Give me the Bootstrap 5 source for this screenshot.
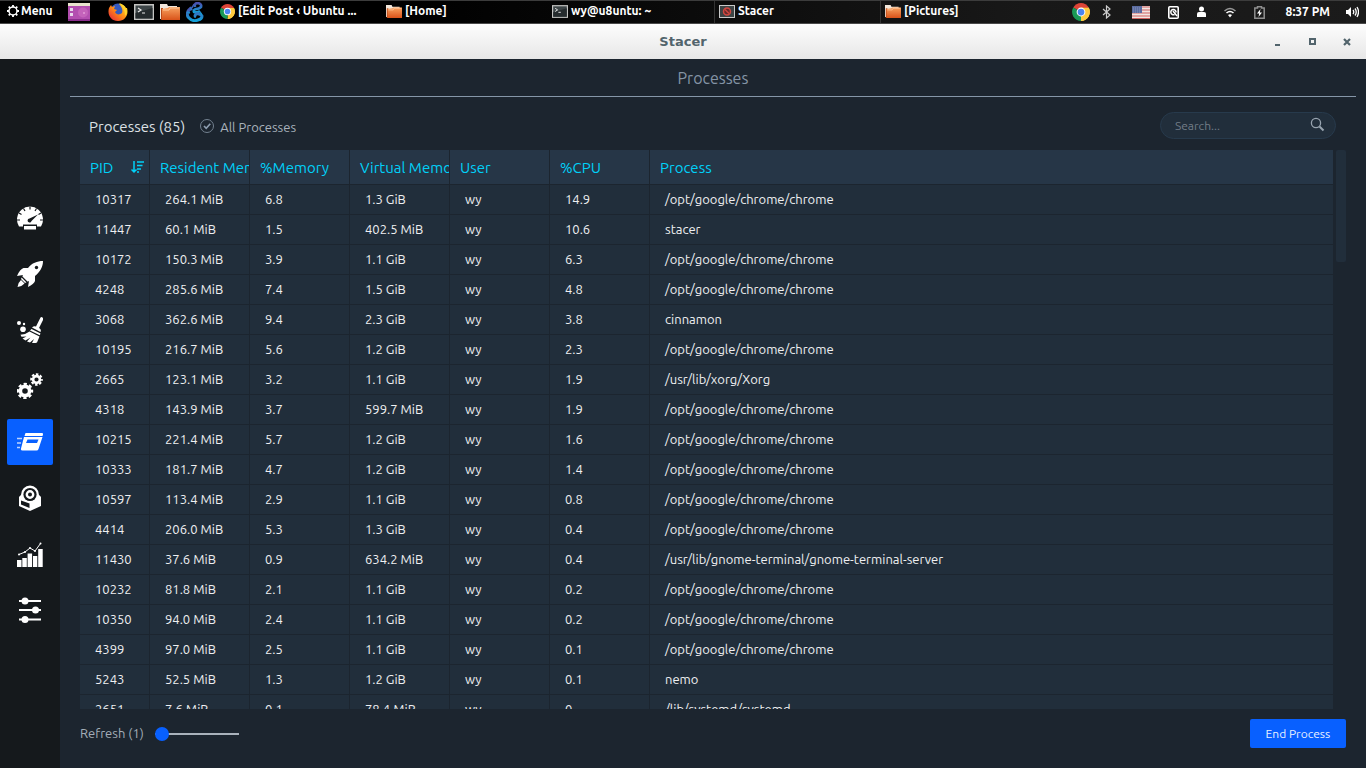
<!DOCTYPE html>
<html lang="en">
<head>
<meta charset="utf-8">
<meta name="viewport" content="width=device-width, initial-scale=1">
<title>Stacer</title>
<link href="https://cdn.jsdelivr.net/npm/bootstrap@5.3.0/dist/css/bootstrap.min.css" rel="stylesheet">
<style>
  :root { --st-bg: #1c252f; --st-row: #212e3b; --st-head: #263647; --st-blue: #0860ff; --st-cyan: #00d1f9; --st-line: #8596a8; }
  body { font-family: Ubuntu, "Noto Sans", sans-serif; font-size: 13px; line-height: 20px; background: var(--st-bg); color: #eff0f2; }
  button, input { font: inherit; }
  svg { display: block; flex: none; }

  /* desktop panel */
  .desk-panel { height: 24px; background: linear-gradient(90deg, #000 30%, #181818 75%, #1b1b1b); border-top: 1px solid #3c3c3c; border-bottom: 1px solid #4a4a4a; color: #fff; font-weight: 700; font-size: 12px; line-height: 20px; }
  .desk-panel button { background: none; border: 0; color: inherit; padding: 0; height: 22px; display: flex; align-items: center; }
  .menu-area { width: 216px; padding-left: 6px; }
  .desk-panel .menu-label { width: 62px; gap: 1px; padding-bottom: 2px; }
  .launchers { gap: 6px; }
  .desk-panel .task { width: 166px; padding: 0 0 2px 4px; gap: 3px; white-space: nowrap; }
  .desk-panel .task.lined { border-left: 1px solid #333; }
  .tray { padding-right: 7px; }
  .tray .near { margin-left: 18px; }
  .tray .far { margin-left: 21px; }

  /* title bar */
  .title-bar { height: 35px; background: linear-gradient(#fdfdfd, #e7e7e7); color: #52646c; font: 700 13px/20px "DejaVu Sans", sans-serif; display: grid; grid-template-columns: 1fr auto 1fr; align-items: center; }
  .title-bar button { background: none; border: 0; padding: 0; }
  .win-buttons { gap: 23px; padding-right: 13px; }

  /* side bar */
  .side-bar { width: 60px; background: #15191c; gap: 10px; }
  .side-bar a { width: 46px; height: 46px; border-radius: 2px; color: #fff; display: flex; align-items: center; justify-content: center; }
  .side-bar a.active { background: var(--st-blue); }

  /* page */
  .page-title { font-size: 16px; line-height: 24px; font-weight: 400; color: #8494a5; padding: 7px 0 6px; border-bottom: 1px solid var(--st-line); margin: 0 10px; }
  .tool-row { padding: 14px 30px 10px 29px; height: 53px; }
  .proc-count { font-size: 15px; line-height: 20px; font-weight: 400; color: #dde1e5; padding-top: 2px; }
  .all-check { gap: 6px; margin-left: 15px; color: #a9b2bc; }
  .all-check span { padding-top: 2px; }
  .all-check input { appearance: none; width: 14px; height: 14px; margin: 0; border: 1px solid #73818f; border-radius: 50%; background: url("data:image/svg+xml,%3Csvg xmlns='http://www.w3.org/2000/svg' viewBox='0 0 12 12'%3E%3Cpath d='M3 6l2.2 2.4L9.3 3.8' fill='none' stroke='%238d9db0' stroke-width='1.6'/%3E%3C/svg%3E"); }
  .search-box { width: 176px; height: 27px; border: 1px solid #273a4c; border-radius: 14px; background: var(--st-row); padding: 0 10px 0 14px; color: #98a4b0; }
  .search-box input { background: none; border: 0; outline: 0; min-width: 0; font-size: 12px; color: #98a4b0; padding: 0; }
  .search-box input::placeholder { color: #717c87; opacity: 1; }
  .search-box button { background: none; border: 0; padding: 0 0 2px; color: inherit; }
  .table-area { margin: 0 20px; gap: 3px; min-height: 0; flex: 1 1 0; }
  .table-clip { overflow: hidden; }
  .proc-table { width: 100%; table-layout: fixed; border-collapse: separate; border-spacing: 0; }
  .proc-table th { height: 35px; padding: 2px 0 0 10px; background: var(--st-head); color: var(--st-cyan); font-size: 15px; font-weight: 400; white-space: nowrap; overflow: hidden; }
  .proc-table td { height: 30px; padding: 0 0 2px 15px; background: var(--st-row); white-space: nowrap; }
  .proc-table th, .proc-table td { border-right: 1px solid var(--st-bg); border-bottom: 1px solid var(--st-bg); }
  .proc-table th:last-child, .proc-table td:last-child { border-right: 0; }
  .proc-table .c-pid { width: 70px; }
  .proc-table .c-mid { width: 100px; }
  .scroll-thumb { width: 10px; height: 112px; background: var(--st-row); border-radius: 2px; }
  .foot-row { padding: 10px 20px 20px; color: #a3adb7; }
  .foot-row label { padding-bottom: 2px; }
  .refresh { width: 84px; height: 14px; margin-left: 11px; appearance: none; background: none; }
  .refresh::-webkit-slider-runnable-track { height: 2px; background: #a9b2bc; }
  .refresh::-webkit-slider-thumb { appearance: none; width: 14px; height: 14px; margin-top: -6px; border-radius: 50%; background: var(--st-blue); }
  .btn-end { width: 96px; height: 29px; padding: 0; border: 0; border-radius: 2px; background: var(--st-blue); color: #e8f0ff; font-size: 12px; line-height: 20px; }
</style>
</head>
<body>
<svg width="0" height="0" class="position-absolute" aria-hidden="true">
  <defs>
    <linearGradient id="orange" x1="0" y1="0" x2="0" y2="1"><stop offset="0" stop-color="#f7a260"/><stop offset="1" stop-color="#d9531a"/></linearGradient>
    <linearGradient id="fox" x1="1" y1="0" x2="0" y2="1"><stop offset="0" stop-color="#ffe62e"/><stop offset=".5" stop-color="#ff8a16"/><stop offset="1" stop-color="#e31b3f"/></linearGradient>
    <linearGradient id="dragon" x1="0" y1="0" x2="0" y2="1"><stop offset="0" stop-color="#4a50ae"/><stop offset="1" stop-color="#12a0d8"/></linearGradient>
    <symbol id="chrome" viewBox="0 0 16 16"><path d="M8 8L1.1 4A8 8 0 0 1 14.9 4z" fill="#dd4437"/><path d="M8 8l6.9-4A8 8 0 0 1 8 16z" fill="#fcca3f"/><path d="M8 8v8A8 8 0 0 1 1.1 4z" fill="#1a9a57"/><path d="M8 4.3h6.9A8 8 0 0 1 8 16l3.4-6z" fill="#fcca3f"/><circle cx="8" cy="8" r="3.9" fill="#fff"/><circle cx="8" cy="8" r="3" fill="#4a86f0"/></symbol>
    <symbol id="folder" viewBox="0 0 20 18"><path d="M0 1h7l1 2h9v13H0z" fill="#f2e7dc"/><path d="M1 5h2v12H1z" fill="#bd4a18"/><path d="M2 17V6l6-1 1-1h11v13z" fill="url(#orange)"/><path d="M3 7h6l1-2h9" fill="none" stroke="#ffc79b"/></symbol>
    <symbol id="term" viewBox="0 0 20 16"><path d="M0 0h20v16H0z" fill="#c4c4c2"/><path d="M1.500 1.500h17v13h-17z" fill="#3d4547"/><path d="M1.500 9L18.500 4v10.500h-17z" fill="#252b2d"/><path d="M4 4l3 2-3 2M8 9h3" fill="none" stroke="#e8e8e8" stroke-width="1.200"/></symbol>
  </defs>
</svg>

<div class="vh-100 d-flex flex-column overflow-hidden">
  <nav class="desk-panel d-flex flex-shrink-0" aria-label="Desktop panel">
    <div class="menu-area d-flex align-items-center flex-shrink-0">
      <button type="button" class="menu-label"><svg width="14" height="14" viewBox="0 0 14 14" fill="none" stroke="#fff"><circle cx="7" cy="7" r="4" stroke-width="1.500"/><path d="M7 1v2M7 11v2M1 7h2M11 7h2M2.700 2.700l1.500 1.500M9.800 9.800l1.500 1.500M2.700 11.300l1.500-1.500M9.800 4.200l1.500-1.500" stroke-width="1.800"/></svg>Menu</button>
      <button type="button" aria-label="Show desktop"><svg width="22" height="18" viewBox="0 0 22 18"><path d="M0 0h22v18H0z" fill="#8a2d8c"/><path d="M0 3h22v13H0z" fill="#b34fb0"/><circle cx="15" cy="9.500" r="5" fill="#c463bb"/><circle cx="16" cy="10" r="1" fill="#e39ad8"/><path d="M0 0h22v3H0z" fill="#e9e4cf"/><path d="M2 5h3v3H2zM2 10h3v3H2z" fill="#e8d8ec"/></svg></button>
      <div class="launchers d-flex align-items-center ms-auto me-2 pe-1">
        <button type="button" aria-label="Firefox"><svg width="20" height="20" viewBox="0 0 20 20"><circle cx="10" cy="9" r="7.500" fill="#3459bf"/><path d="M3 3l1 2 3-1-1 3 3 1-2 2c1 3 5 3 7 1 1-3 0-6-3-9 4 0 6 2 7 4l1 0c2 7-2 13-9 13S-1 13 1 6z" fill="url(#fox)"/><path d="M11 1c4 1 8 5 8 10l-2 3c0-5-1-8-6-13z" fill="#ffd52c"/></svg></button>
        <button type="button" aria-label="Terminal"><svg width="20" height="16"><use href="#term"/></svg></button>
        <button type="button" aria-label="Files"><svg width="20" height="18"><use href="#folder"/></svg></button>
        <button type="button" aria-label="Dragon editor"><svg width="18" height="20" viewBox="0 0 18 20" fill="none" stroke="url(#dragon)"><path d="M9 5q-1-4 3-4 4 1 3 4-2 2-5 2-3 1-2 3 3 1 6-1" stroke-width="2.600"/><path d="M6 6C1 8 0 13 3 16q4 4 9 2 4-1 4-4-2-3-6-2-2 2 0 3" stroke-width="3"/><path d="M8 2L6 6M4 5l2 3M1 10l3 1M14 10l2 3" stroke-width="1.500"/></svg></button>
      </div>
    </div>
    <button type="button" class="task"><svg width="15" height="15"><use href="#chrome"/></svg>[Edit Post ‹ Ubuntu ...</button>
    <button type="button" class="task"><svg width="16" height="15"><use href="#folder"/></svg>[Home]</button>
    <button type="button" class="task"><svg width="16" height="13"><use href="#term"/></svg>wy@u8untu: ~</button>
    <button type="button" class="task lined"><svg width="16" height="13" viewBox="0 0 16 13"><path d="M0 0h16v13H0z" fill="#c9c9c9"/><path d="M1 1h14v11H1z" fill="#3c4445"/><circle cx="8" cy="6.500" r="3.500" fill="#642b2b" stroke="#d04740" stroke-width="1.500"/><path d="M6 4.500l4 4" stroke="#d04740" stroke-width="1.500"/></svg>Stacer</button>
    <button type="button" class="task lined"><svg width="16" height="15"><use href="#folder"/></svg>[Pictures]</button>
    <div class="tray d-flex align-items-center ms-auto">
      <button type="button" aria-label="Chrome"><svg width="18" height="18"><use href="#chrome"/></svg></button>
      <button type="button" class="ms-2 ps-1" aria-label="Bluetooth"><svg width="9" height="14" viewBox="0 0 9 14" fill="none" stroke="#ccc" stroke-width="1.200"><path d="M1 4l7 6-3.500 3V1L8 4l-7 6"/></svg></button>
      <button type="button" class="far" aria-label="Keyboard layout"><svg width="18" height="13" viewBox="0 0 18 13"><path d="M0 0h18v13H0z" fill="#f0e5e2"/><path d="M0 1h18M0 4h18M0 7h18M0 10h18M0 12.500h18" stroke="#cf6260" stroke-width="1.200"/><path d="M0 0h10v7H0z" fill="#5b6c9f"/><path d="M1 2h8M1 4h8M1 6h8" stroke="#8793bb" stroke-dasharray="1 1"/></svg></button>
      <button type="button" class="near" aria-label="Disk"><svg width="11" height="13" viewBox="0 0 11 13"><rect x=".8" y=".8" width="9.400" height="11.400" rx="1" fill="none" stroke="#fff" stroke-width="1.600"/><path d="M6.500 8.500A2.600 2.600 0 1 1 8 6.500M5 5l4 5" fill="none" stroke="#fff" stroke-width="1.500"/></svg></button>
      <button type="button" class="near" aria-label="User"><svg width="9" height="12" viewBox="0 0 9 12" fill="#fff"><circle cx="4.500" cy="3" r="2.500"/><path d="M0 11V8q0-2 2-2h5q2 0 2 2v3z"/></svg></button>
      <button type="button" class="near" aria-label="Wireless network"><svg width="12" height="11" viewBox="0 0 12 11" fill="none"><path d="M.5 4q5.500-5 11 0" stroke="#999" stroke-width="1.500"/><path d="M2.500 6q3.500-3 7 0" stroke="#fff" stroke-width="1.600"/><path d="M4 8q2-1.500 4 0l-2 2.500z" fill="#fff"/></svg></button>
      <button type="button" class="near" aria-label="Battery"><svg width="11" height="13" viewBox="0 0 11 13"><path d="M3.500 2V.7h4V2h2.700v10.200H.8V2z" fill="none" stroke="#8f8f8f" stroke-width="1.500"/><path d="M6.500 3L3 7.500h2.200L4.500 11 8 6.500H5.800z" fill="#fff"/></svg></button>
      <span class="far">8:37 PM</span>
      <button type="button" class="ms-3" aria-label="Volume"><svg width="13" height="12" viewBox="0 0 13 12" fill="none" stroke="#fff" stroke-width="1.300"><path d="M0 4h2l3-3v10L2 8H0z" fill="#fff" stroke="none"/><path d="M7 4q1.500 2 0 4M9 2.500q2.500 3.500 0 7M11 1q3 5 0 10"/></svg></button>
    </div>
  </nav>

  <header class="title-bar flex-shrink-0">
    <span></span><span>Stacer</span>
    <div class="win-buttons d-flex justify-content-end align-items-center">
      <button type="button" aria-label="Minimize"><svg width="12" height="10"><path d="M4 7h5v2H4z" fill="#52646c"/></svg></button>
      <button type="button" aria-label="Maximize"><svg width="12" height="10"><path d="M4 2h5v5H4z" fill="none" stroke="#52646c" stroke-width="2"/></svg></button>
      <button type="button" aria-label="Close"><svg width="12" height="10"><path d="M3 2l6 6M9 2L3 8" stroke="#52646c" stroke-width="2.200"/></svg></button>
    </div>
  </header>

  <div class="d-flex flex-grow-1 overflow-hidden">
    <nav class="side-bar d-flex flex-column align-items-center justify-content-center flex-shrink-0" aria-label="Sections">
      <a href="#" aria-label="Dashboard"><svg width="26" height="26" viewBox="0 0 26 26"><path d="M2 21.500A13 13 0 1 1 24 21.500z" fill="#fff"/><path d="M13 1.500v3M6.500 3.500l1.500 2.500M19.500 3.500L18 6M2 8l2.500 1.500M24 8l-2.500 1.500M0 15h3M26 15h-3" stroke="#15191c" stroke-width="1.200"/><path d="M21 9.500l-6.500 6.500a2 2 0 1 1-2-2.500z" fill="#15191c"/><path d="M6 19.500h14V25H6z" fill="#15191c"/><path d="M7 21h12v3.500H7z" fill="#fff"/></svg></a>
      <a href="#" aria-label="Startup apps"><svg width="26" height="26" viewBox="0 0 26 26" fill="#fff"><path d="M26 0C20 0 15 2 11 7H6.500Q3 8 0 15l6-1-2 4 4 4 4-2-1 6q6-3 7-6v-5c5-4 8-9 8-15z"/><circle cx="19.500" cy="6.500" r="1.700" fill="#15191c"/><path d="M4.500 15.500l6 6M3 20l3 3" stroke="#15191c" stroke-width="1.300"/><path d="M4 19l3.500 3.500Q5 25.500.5 26q.5-4.500 3.500-7z"/></svg></a>
      <a href="#" aria-label="System cleaner"><svg width="26" height="26" viewBox="0 0 26 26" fill="#fff"><circle cx="2" cy="6" r="2"/><circle cx="7" cy="7" r="1.200"/><circle cx="6" cy="12.300" r="2.800"/><path d="M23.500.5q1-1 2.500.5v2l-4 8-3-1.500zM15 10.500q2-2 4-1l3.500 1.800q2 1.500 1 3.700z"/><path d="M14.500 12l9 4.500-.7 1.800-9.800-4.800zM12.500 14.500l10 5-2.500 6q-2 1-5 .5l2-4-4 3.500-3-1 3.500-4-5 3-3-2 4-2-5 .2-1-2q5 0 9-3.200z"/></svg></a>
      <a href="#" aria-label="Services"><svg width="26" height="26" viewBox="0 0 26 26" fill="none" stroke="#fff"><circle cx="8" cy="18" r="4.600" stroke-width="3.600"/><circle cx="8" cy="18" r="7" stroke-width="2.400" stroke-dasharray="3.200 2.300" stroke-dashoffset="1.600"/><circle cx="19.500" cy="6.500" r="3.400" stroke-width="2.600"/><circle cx="19.500" cy="6.500" r="5.300" stroke-width="2" stroke-dasharray="2.500 1.660" stroke-dashoffset="1.250"/></svg></a>
      <a href="#" class="active" aria-label="Processes" aria-current="page"><svg width="26" height="26" viewBox="0 0 26 26"><path d="M8.500 4H25q1.500 0 1 1.500l-.5 1.500H7.500zM7 8h18.500l-4 12q-.5 1.500-2 1.500H5.500q-2 0-1.500-2z" fill="#fff"/><path d="M10.500 10.500h11L20 14H9z" fill="#0860ff"/><path d="M0 9.500h5M0 14h4M0 18.500h3" stroke="#bcd3ff" stroke-width="1.500"/></svg></a>
      <a href="#" aria-label="Uninstaller"><svg width="26" height="26" viewBox="0 0 26 26"><path d="M4 10a9 9.500 0 0 1 18 0l2 2v9l-11 5-11-5v-9z" fill="#fff"/><circle cx="13" cy="9.500" r="6.600" fill="#15191c"/><circle cx="13" cy="9.500" r="3.200" fill="none" stroke="#fff" stroke-width="2.400"/><path d="M4.500 10L2 12.500l11 4.500 11-4.500-2.500-2.500q-1 7-8.500 7t-8.500-7z" fill="#fff"/><path d="M4 15.500l8.500 3V23L4 19.500z" fill="#15191c"/></svg></a>
      <a href="#" aria-label="Resources"><svg width="26" height="26" viewBox="0 0 26 26"><path d="M0 19h4.500v7H0zM5.300 17h4.500v9H5.300zM10.600 12.500h4.500V26h-4.500zM16 15h4.300v11H16zM21.200 8h4.500v18h-4.500z" fill="#fff"/><path d="M2 13.500L8 11l5-4 5 3 5.500-7.500" fill="none" stroke="#fff"/><g fill="#fff"><circle cx="2" cy="13.500" r="1"/><circle cx="8" cy="11" r="1"/><circle cx="13" cy="7" r="1"/><circle cx="18" cy="10" r="1"/><circle cx="23.500" cy="2.500" r="1"/></g></svg></a>
      <a href="#" aria-label="Settings"><svg width="26" height="26" viewBox="0 0 26 26"><path d="M2 4h22M2 13h22M2 22.500h22" stroke="#fff" stroke-width="2"/><circle cx="8" cy="4" r="3.500" fill="#fff"/><circle cx="18.500" cy="13" r="3.500" fill="#fff"/><circle cx="8" cy="22.500" r="3.500" fill="#fff"/></svg></a>
    </nav>

    <main class="d-flex flex-column flex-grow-1 overflow-hidden">
      <h1 class="page-title text-center">Processes</h1>
      <div class="tool-row d-flex align-items-center">
        <h2 class="proc-count mb-0">Processes (85)</h2>
        <label class="all-check d-flex align-items-center"><input type="checkbox" checked><span>All Processes</span></label>
        <div class="search-box d-flex align-items-center ms-auto">
          <input type="search" class="flex-grow-1" placeholder="Search..." aria-label="Search processes">
          <button type="submit" aria-label="Search"><svg width="15" height="15" viewBox="0 0 15 15" fill="none" stroke="currentColor"><circle cx="6" cy="6" r="4.600" stroke-width="1.300"/><path d="M9.500 9.500L13.500 13.500" stroke-width="2"/></svg></button>
        </div>
      </div>
      <div class="table-area d-flex">
        <div class="table-clip flex-grow-1">
          <table class="proc-table">
            <thead><tr><th class="c-pid"><span class="d-flex align-items-center justify-content-between pe-1">PID<svg width="14" height="14" viewBox="0 0 14 14" fill="none" stroke="#00d1f9"><path d="M3 0v11M.5 8.500L3 11l2.500-2.500M6 1h7M6 4.500h5.500M6 8h4M6 11h2" stroke-width="1.500"/></svg></span></th><th class="c-mid">Resident Memory</th><th class="c-mid">%Memory</th><th class="c-mid">Virtual Memory</th><th class="c-mid">User</th><th class="c-mid">%CPU</th><th>Process</th></tr></thead>
            <tbody>
              <tr><td>10317</td><td>264.1 MiB</td><td>6.8</td><td>1.3 GiB</td><td>wy</td><td>14.9</td><td>/opt/google/chrome/chrome</td></tr>
              <tr><td>11447</td><td>60.1 MiB</td><td>1.5</td><td>402.5 MiB</td><td>wy</td><td>10.6</td><td>stacer</td></tr>
              <tr><td>10172</td><td>150.3 MiB</td><td>3.9</td><td>1.1 GiB</td><td>wy</td><td>6.3</td><td>/opt/google/chrome/chrome</td></tr>
              <tr><td>4248</td><td>285.6 MiB</td><td>7.4</td><td>1.5 GiB</td><td>wy</td><td>4.8</td><td>/opt/google/chrome/chrome</td></tr>
              <tr><td>3068</td><td>362.6 MiB</td><td>9.4</td><td>2.3 GiB</td><td>wy</td><td>3.8</td><td>cinnamon</td></tr>
              <tr><td>10195</td><td>216.7 MiB</td><td>5.6</td><td>1.2 GiB</td><td>wy</td><td>2.3</td><td>/opt/google/chrome/chrome</td></tr>
              <tr><td>2665</td><td>123.1 MiB</td><td>3.2</td><td>1.1 GiB</td><td>wy</td><td>1.9</td><td>/usr/lib/xorg/Xorg</td></tr>
              <tr><td>4318</td><td>143.9 MiB</td><td>3.7</td><td>599.7 MiB</td><td>wy</td><td>1.9</td><td>/opt/google/chrome/chrome</td></tr>
              <tr><td>10215</td><td>221.4 MiB</td><td>5.7</td><td>1.2 GiB</td><td>wy</td><td>1.6</td><td>/opt/google/chrome/chrome</td></tr>
              <tr><td>10333</td><td>181.7 MiB</td><td>4.7</td><td>1.2 GiB</td><td>wy</td><td>1.4</td><td>/opt/google/chrome/chrome</td></tr>
              <tr><td>10597</td><td>113.4 MiB</td><td>2.9</td><td>1.1 GiB</td><td>wy</td><td>0.8</td><td>/opt/google/chrome/chrome</td></tr>
              <tr><td>4414</td><td>206.0 MiB</td><td>5.3</td><td>1.3 GiB</td><td>wy</td><td>0.4</td><td>/opt/google/chrome/chrome</td></tr>
              <tr><td>11430</td><td>37.6 MiB</td><td>0.9</td><td>634.2 MiB</td><td>wy</td><td>0.4</td><td>/usr/lib/gnome-terminal/gnome-terminal-server</td></tr>
              <tr><td>10232</td><td>81.8 MiB</td><td>2.1</td><td>1.1 GiB</td><td>wy</td><td>0.2</td><td>/opt/google/chrome/chrome</td></tr>
              <tr><td>10350</td><td>94.0 MiB</td><td>2.4</td><td>1.1 GiB</td><td>wy</td><td>0.2</td><td>/opt/google/chrome/chrome</td></tr>
              <tr><td>4399</td><td>97.0 MiB</td><td>2.5</td><td>1.1 GiB</td><td>wy</td><td>0.1</td><td>/opt/google/chrome/chrome</td></tr>
              <tr><td>5243</td><td>52.5 MiB</td><td>1.3</td><td>1.2 GiB</td><td>wy</td><td>0.1</td><td>nemo</td></tr>
              <tr><td>2651</td><td>7.6 MiB</td><td>0.1</td><td>78.4 MiB</td><td>wy</td><td>0</td><td>/lib/systemd/systemd</td></tr>
            </tbody>
          </table>
        </div>
        <div class="scroll-thumb flex-shrink-0"></div>
      </div>
      <div class="foot-row d-flex align-items-center">
        <label for="refresh">Refresh (1)</label>
        <input type="range" id="refresh" class="refresh" min="1" max="10" value="1">
        <button type="button" class="btn btn-end ms-auto">End Process</button>
      </div>
    </main>
  </div>
</div>
<script src="https://cdn.jsdelivr.net/npm/bootstrap@5.3.0/dist/js/bootstrap.bundle.min.js"></script>
</body>
</html>
